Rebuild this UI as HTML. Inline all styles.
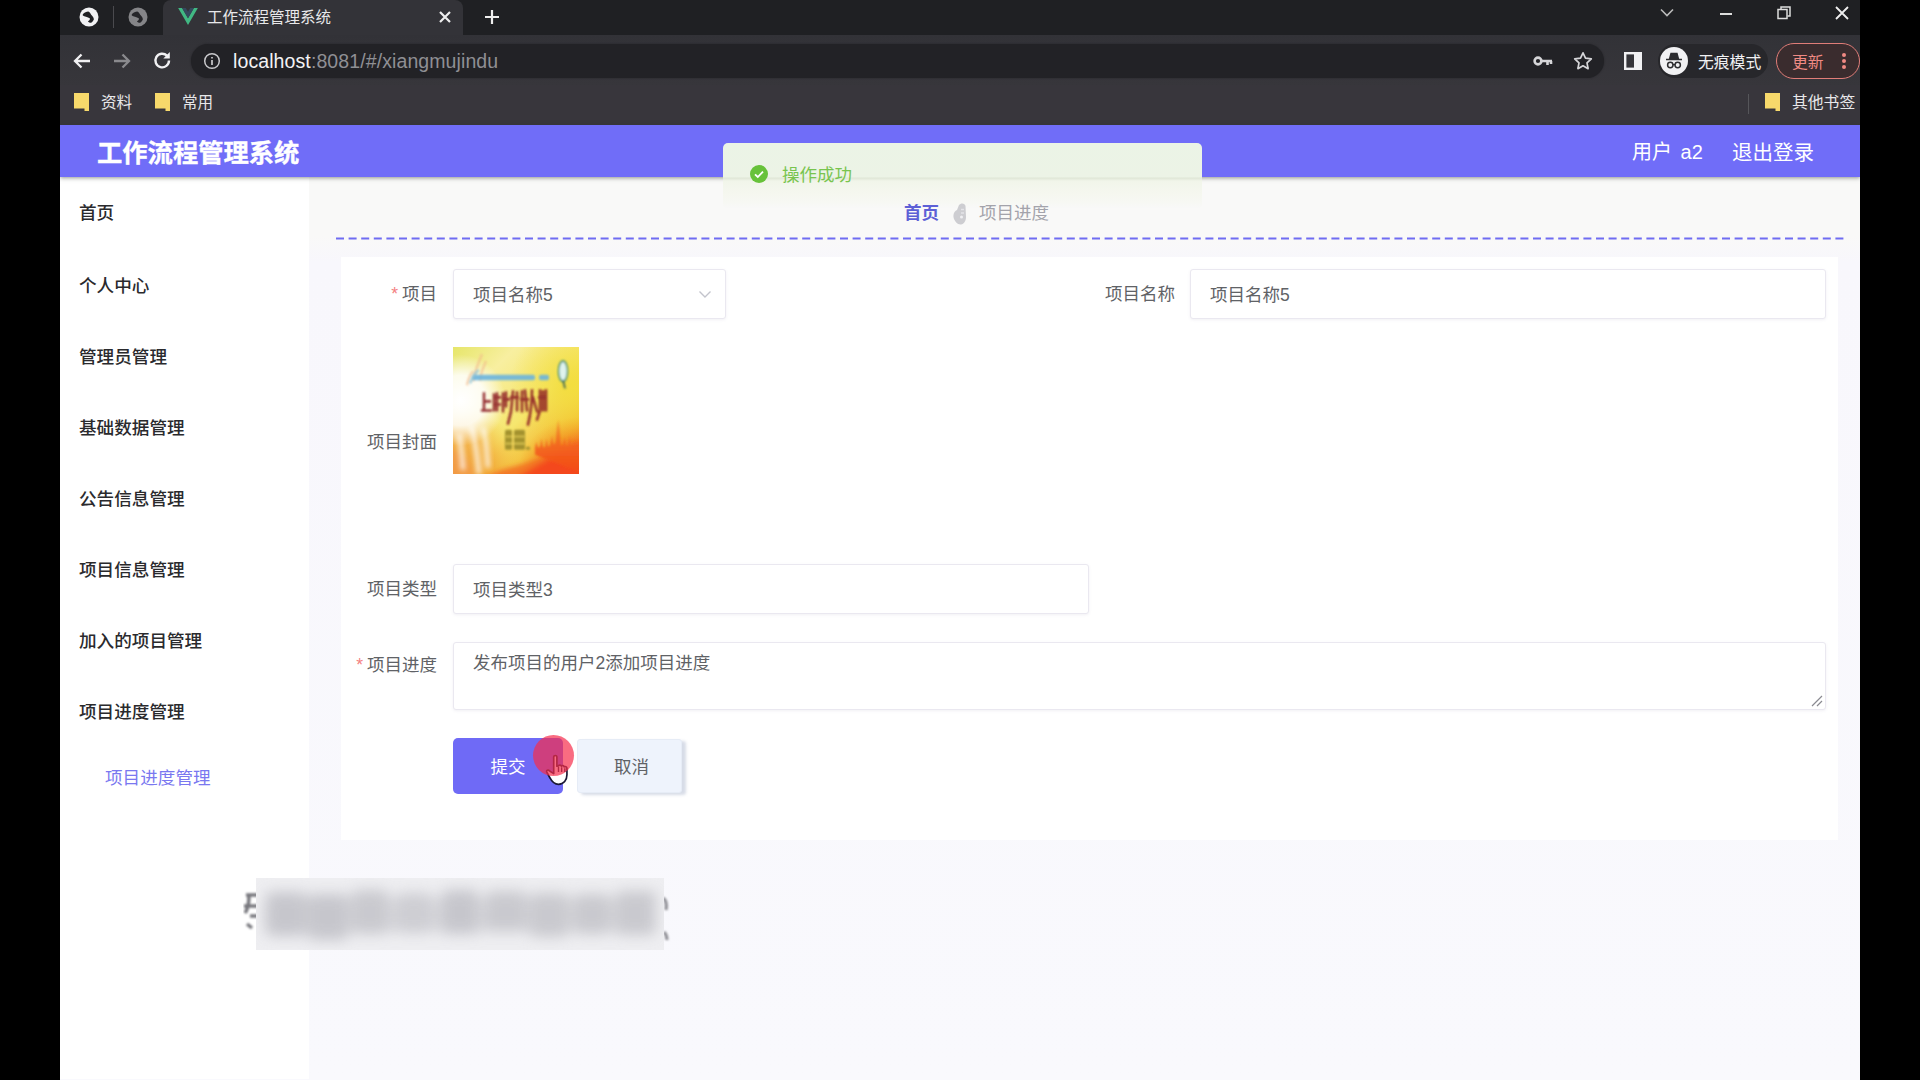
<!DOCTYPE html>
<html lang="zh-CN">
<head>
<meta charset="utf-8">
<title>工作流程管理系统</title>
<style>
*{box-sizing:border-box;margin:0;padding:0}
html,body{width:1920px;height:1080px;overflow:hidden;background:#000}
body{font-family:"Liberation Sans","Noto Sans CJK SC",sans-serif;position:relative;color:#333}
.abs{position:absolute}
#frame{position:absolute;left:60px;top:0;width:1800px;height:1080px;background:linear-gradient(#f9f9f8 0,#f9f9f8 236px,#f8f7fc 262px,#f9f9fd 100%);overflow:hidden}
/* browser chrome */
#tabstrip{position:absolute;left:0;top:0;width:1800px;height:35px;background:#1f2023}
#tab{position:absolute;left:103px;top:0;width:300px;height:35px;background:#333338;border-radius:8px 8px 0 0}
#toolbar{position:absolute;left:0;top:35px;width:1800px;height:50px;background:linear-gradient(#323237,#37363b)}
#urlpill{position:absolute;left:131px;top:9px;width:1413px;height:34px;border-radius:17px;background:#222226;box-shadow:0 0 2px #222226}
#bookmarks{position:absolute;left:0;top:85px;width:1800px;height:40px;background:#38363c}
.ctext{color:#e8e8ea;font-size:15px;white-space:nowrap;position:absolute}
/* app */
#apphead{position:absolute;left:0;top:125px;width:1800px;height:52px;background:#706df8;box-shadow:0 1px 4px rgba(40,50,40,.5)}
#sidebar{position:absolute;left:0;top:177px;width:249px;height:902px;background:#fff}
.mi{position:absolute;left:19px;font-size:17.6px;color:#2a2a2d;font-weight:500;white-space:nowrap;line-height:24px}
.lbl{position:absolute;font-size:17.5px;color:#606266;white-space:nowrap;line-height:24px;text-align:right}
.inp{position:absolute;background:#fff;border:1px solid #eae8f0;border-radius:3px;box-shadow:0 1px 3px rgba(120,110,150,.10);font-size:17.5px;color:#606266;line-height:24px;white-space:nowrap}
.inp span{position:absolute;left:19px}
.star{color:#f47f82;margin-right:4px}
</style>
</head>
<body>
<div id="frame">
  <!-- ===== browser chrome ===== -->
  <div id="tabstrip">
    <!-- globe icons -->
    <svg class="abs" style="left:18px;top:6px" width="22" height="22" viewBox="0 0 22 22"><circle cx="11" cy="11" r="9.5" fill="#f1f1f3"/><path d="M4.800 8.200C6.500 6.600 8.500 5.600 10.300 5.600c1.300.6 2.200 1.800 2.900 3.200 1.300 1.100 2.300 2.600 2.700 4.400-.5 1.600-1.500 2.800-2.900 3.600-1.200 0-2.300-.5-3.100-1.400 1.200-.6 2-1.600 2.100-2.900-1.200-.9-2.600-1.500-4-1.800-1.200-.2-2.300-.6-3.200-1.300z" fill="#1f2023"/></svg>
    <div class="abs" style="left:53px;top:6px;width:1px;height:22px;background:#4a4a4e"></div>
    <svg class="abs" style="left:67px;top:6px" width="22" height="22" viewBox="0 0 22 22"><circle cx="11" cy="11" r="9.500" fill="#858588"/><path d="M4.800 8.200C6.500 6.600 8.500 5.600 10.300 5.600c1.300.6 2.200 1.800 2.900 3.200 1.300 1.100 2.300 2.600 2.700 4.400-.5 1.600-1.500 2.800-2.900 3.600-1.200 0-2.300-.5-3.100-1.400 1.200-.6 2-1.600 2.100-2.900-1.200-.9-2.600-1.500-4-1.800-1.200-.2-2.300-.6-3.200-1.300z" fill="#26262a"/></svg>
    <div id="tab"></div>
    <!-- vue logo -->
    <svg class="abs" style="left:118px;top:8px" width="20" height="17" viewBox="0 0 22 19"><path d="M0 0h4.400L11 11.400 17.600 0H22L11 19z" fill="#41b883"/><path d="M4.400 0h4.100L11 4.300 13.500 0h4.100L11 11.400z" fill="#35495e"/></svg>
    <div class="ctext" style="left:147px;top:7px;font-size:15.5px;line-height:22px">工作流程管理系统</div>
    <svg class="abs" style="left:379px;top:11px" width="12" height="12" viewBox="0 0 12 12"><path d="M1 1l10 10M11 1L1 11" stroke="#eee" stroke-width="2.200" fill="none"/></svg>
    <svg class="abs" style="left:424px;top:9px" width="16" height="16" viewBox="0 0 16 16"><path d="M8 1v14M1 8h14" stroke="#eee" stroke-width="2.200" fill="none"/></svg>
    <!-- window controls -->
    <svg class="abs" style="left:1600px;top:8px" width="14" height="10" viewBox="0 0 14 10"><path d="M1 1.500l6 6 6-6" stroke="#bbb" stroke-width="1.600" fill="none"/></svg>
    <div class="abs" style="left:1660px;top:13px;width:12px;height:2px;background:#ddd"></div>
    <svg class="abs" style="left:1717px;top:6px" width="14" height="14" viewBox="0 0 14 14"><rect x="1" y="3.500" width="9" height="9" fill="none" stroke="#ddd" stroke-width="1.500"/><path d="M4 3.500V1h9v9h-2.500" fill="none" stroke="#ddd" stroke-width="1.500"/></svg>
    <svg class="abs" style="left:1775px;top:6px" width="14" height="14" viewBox="0 0 14 14"><path d="M1 1l12 12M13 1L1 13" stroke="#eee" stroke-width="1.800" fill="none"/></svg>
  </div>
  <div id="toolbar">
    <svg class="abs" style="left:12px;top:16px" width="20" height="20" viewBox="0 0 20 20"><path d="M18 10H3M9.500 3.500L3 10l6.500 6.500" stroke="#f1f1f3" stroke-width="2.300" fill="none"/></svg>
    <svg class="abs" style="left:52px;top:16px" width="20" height="20" viewBox="0 0 20 20"><path d="M2 10h15M10.500 3.500L17 10l-6.500 6.500" stroke="#8a8a8e" stroke-width="2.300" fill="none"/></svg>
    <svg class="abs" style="left:92px;top:15px" width="21" height="21" viewBox="0 0 21 21"><path d="M17 10.500a6.800 6.800 0 1 1-2-4.800" stroke="#f1f1f3" stroke-width="2.400" fill="none"/><path d="M17.800 2v6.500h-6.500z" fill="#f1f1f3"/></svg>
    <div id="urlpill">
      <svg class="abs" style="left:12px;top:8px" width="18" height="18" viewBox="0 0 18 18"><circle cx="9" cy="9" r="7.300" stroke="#c9c9cc" stroke-width="1.500" fill="none"/><path d="M9 8v5M9 5v1.600" stroke="#c9c9cc" stroke-width="1.700"/></svg>
      <div class="ctext" style="left:42px;top:4px;font-size:19.5px;line-height:26px;letter-spacing:.1px;color:#f3f3f5">localhost<span style="color:#8f8f94">:8081/#/xiangmujindu</span></div>
      <!-- key -->
      <svg class="abs" style="left:1342px;top:10px" width="20" height="14" viewBox="0 0 20 14"><circle cx="5" cy="7" r="3.400" stroke="#d6d6d9" stroke-width="2.600" fill="none"/><path d="M8 7h11M14.500 7v4M18 7v3" stroke="#d6d6d9" stroke-width="2.600" fill="none"/></svg>
      <!-- star -->
      <svg class="abs" style="left:1382px;top:7px" width="20" height="20" viewBox="0 0 20 20"><path d="M10 1.800l2.500 5.400 5.800.7-4.300 4 1.100 5.800L10 14.800l-5.100 2.900L6 11.900l-4.300-4 5.800-.7z" stroke="#d6d6d9" stroke-width="1.700" fill="none" stroke-linejoin="round"/></svg>
    </div>
    <!-- side panel -->
    <svg class="abs" style="left:1564px;top:17px" width="18" height="18" viewBox="0 0 18 18"><rect x="1.200" y="1.200" width="15.600" height="15.600" fill="none" stroke="#f1f1f3" stroke-width="2.400"/><rect x="10" y="1" width="7" height="16" fill="#f1f1f3"/></svg>
    <!-- incognito -->
    <div class="abs" style="left:1598px;top:9px;width:110px;height:34px;border-radius:17px;background:#27272b"></div>
    <svg class="abs" style="left:1600px;top:12px" width="28" height="28" viewBox="0 0 28 28"><circle cx="14" cy="14" r="14" fill="#f1f1f3"/><path d="M6 12.500h16M9.500 12l1.500-5.500h6l1.500 5.500z" fill="#2c2c2f" stroke="#2c2c2f" stroke-width="1.400"/><circle cx="10.300" cy="18" r="2.700" fill="none" stroke="#2c2c2f" stroke-width="1.500"/><circle cx="17.700" cy="18" r="2.700" fill="none" stroke="#2c2c2f" stroke-width="1.500"/><path d="M13 17.600h2" stroke="#2c2c2f" stroke-width="1.400"/></svg>
    <div class="ctext" style="left:1638px;top:17px;font-size:15.8px;line-height:22px;color:#f1f1f3">无痕模式</div>
    <div class="abs" style="left:1716px;top:8px;width:84px;height:36px;border:1.500px solid #e07d78;border-radius:18px;background:#3a2c2e"></div>
    <div class="ctext" style="left:1732px;top:17px;font-size:15.8px;line-height:22px;color:#f08a84">更新</div>
    <div class="abs" style="left:1782px;top:18px;width:4px;height:4px;border-radius:2px;background:#f08a84;box-shadow:0 6px 0 #f08a84,0 12px 0 #f08a84"></div>
  </div>
  <div id="bookmarks">
    <svg class="abs" style="left:14px;top:8px" width="15" height="18" viewBox="0 0 15 18"><path d="M0 0h15v18h-4.500v-2.500H0z" fill="#f7d96b"/></svg>
    <div class="ctext" style="left:41px;top:7px;font-size:15.6px;line-height:22px">资料</div>
    <svg class="abs" style="left:95px;top:8px" width="15" height="18" viewBox="0 0 15 18"><path d="M0 0h15v18h-4.500v-2.500H0z" fill="#f7d96b"/></svg>
    <div class="ctext" style="left:122px;top:7px;font-size:15.6px;line-height:22px">常用</div>
    <div class="abs" style="left:1688px;top:9px;width:1px;height:20px;background:#56565a"></div>
    <svg class="abs" style="left:1705px;top:8px" width="15" height="18" viewBox="0 0 15 18"><path d="M0 0h15v18h-4.500v-2.500H0z" fill="#f7d96b"/></svg>
    <div class="ctext" style="left:1732px;top:7px;font-size:15.8px;line-height:22px">其他书签</div>
  </div>

  <!-- ===== app ===== -->
  <div id="sidebar">
    <div class="mi" style="top:24px">首页</div>
    <div class="mi" style="top:97px">个人中心</div>
    <div class="mi" style="top:168px">管理员管理</div>
    <div class="mi" style="top:239px">基础数据管理</div>
    <div class="mi" style="top:310px">公告信息管理</div>
    <div class="mi" style="top:381px">项目信息管理</div>
    <div class="mi" style="top:452px">加入的项目管理</div>
    <div class="mi" style="top:523px">项目进度管理</div>
    <div class="mi" style="left:45px;top:589px;color:#7a78f0;font-weight:400">项目进度管理</div>
  </div>
  <div id="main">
    <!-- breadcrumb -->
    <div class="abs" style="z-index:5;left:844px;top:201px;font-size:17.500px;line-height:24px;font-weight:700;color:#5d60d6;white-space:nowrap">首页</div>
    <svg class="abs" style="z-index:5;left:891px;top:201px" width="18" height="26" viewBox="0 0 18 26"><g style="filter:blur(.7px)"><path d="M8 4c2-2.500 6-2 6.500 1l.5 11c0 4-2 7-5 7.500S3 20 2.500 16 4 10 6 9z" fill="#cdcdd1"/><path d="M10 8.500h3M10 12h3" stroke="#e4e4e8" stroke-width="1.300"/><circle cx="10.500" cy="16" r="1.500" fill="#f0f0f3"/></g></svg>
    <div class="abs" style="z-index:5;left:919px;top:201px;font-size:17.500px;line-height:24px;color:#a3a3ab;white-space:nowrap">项目进度</div>
    <!-- dashed line -->
    <svg class="abs" style="left:276px;top:236px" width="1508" height="5"><line x1="0" y1="2.500" x2="1508" y2="2.500" stroke="#6f6cf2" stroke-width="2.200" stroke-dasharray="8 4.600"/></svg>
    <!-- card -->
    <div id="card" class="abs" style="left:281px;top:257px;width:1497px;height:583px;background:#fff"></div>

    <!-- row 1 -->
    <div class="lbl" style="left:277px;width:100px;top:282px"><span class="star">*</span>项目</div>
    <div class="inp" style="left:393px;top:269px;width:273px;height:50px"><span style="top:13px">项目名称5</span>
      <svg class="abs" style="left:244px;top:20px" width="14" height="9" viewBox="0 0 14 9"><path d="M1.500 1.500L7 7l5.500-5.500" stroke="#c3c4cc" stroke-width="1.400" fill="none"/></svg>
    </div>
    <div class="lbl" style="left:1015px;width:100px;top:282px">项目名称</div>
    <div class="inp" style="left:1130px;top:269px;width:636px;height:50px"><span style="top:13px">项目名称5</span></div>

    <!-- cover -->
    <div class="lbl" style="left:277px;width:100px;top:430px">项目封面</div>
    <svg id="cover" class="abs" style="left:393px;top:347px" width="126" height="127" viewBox="0 0 126 126" preserveAspectRatio="none">
      <defs>
        <linearGradient id="cg1" x1="0" y1="0" x2="1" y2="1"><stop offset="0" stop-color="#e6e66a"/><stop offset=".25" stop-color="#f8efa0"/><stop offset=".55" stop-color="#f6e66e"/><stop offset=".8" stop-color="#f3b32a"/><stop offset="1" stop-color="#f2541c"/></linearGradient>
        <radialGradient id="cg2" cx="0.06" cy="0.42" r="0.36"><stop offset="0" stop-color="#fff" stop-opacity="1"/><stop offset=".55" stop-color="#fff" stop-opacity=".85"/><stop offset="1" stop-color="#fff" stop-opacity="0"/></radialGradient>
        <radialGradient id="cg3" cx="1" cy="1.050" r="0.5"><stop offset="0" stop-color="#f53a12"/><stop offset=".6" stop-color="#f4571a" stop-opacity=".9"/><stop offset="1" stop-color="#f48a20" stop-opacity="0"/></radialGradient>
        <radialGradient id="cg4" cx="0" cy="1" r="0.55"><stop offset="0" stop-color="#f09a3a"/><stop offset=".6" stop-color="#f2a838" stop-opacity=".8"/><stop offset="1" stop-color="#f4c040" stop-opacity="0"/></radialGradient>
        <radialGradient id="cg5" cx="0.95" cy="0.3" r="0.5"><stop offset="0" stop-color="#f3de3e"/><stop offset="1" stop-color="#f3de3e" stop-opacity="0"/></radialGradient>
        <linearGradient id="cg6" x1="0" y1="0" x2="0" y2="1"><stop offset="0" stop-color="#f08a2a" stop-opacity=".75"/><stop offset=".45" stop-color="#f2661e" stop-opacity=".9"/><stop offset="1" stop-color="#f44a16" stop-opacity=".95"/></linearGradient>
        <filter id="cb1" x="-20%" y="-20%" width="140%" height="140%"><feGaussianBlur stdDeviation="1.100"/></filter>
        <filter id="cb2" x="-20%" y="-20%" width="140%" height="140%"><feGaussianBlur stdDeviation="2.500"/></filter>
        <clipPath id="cc"><rect width="126" height="126"/></clipPath>
      </defs>
      <g clip-path="url(#cc)">
        <rect width="126" height="126" fill="url(#cg1)"/>
        <rect width="126" height="126" fill="url(#cg5)"/>
        <rect width="126" height="126" fill="url(#cg4)"/>
        <rect width="126" height="126" fill="url(#cg3)" opacity=".55"/>
        <g filter="url(#cb2)"><path d="M26 132L48 122 70 116 90 109 106 102 130 93V132z" fill="#f3681e" opacity=".8"/><path d="M60 132L84 118 104 107 130 97V132z" fill="#f4461a" opacity=".9"/><path d="M-4 100c10 4 20 12 28 30H-4z" fill="#f29a4a" opacity=".7"/></g>
        <rect width="126" height="126" fill="url(#cg2)"/>
        <!-- white streaks bottom-left -->
        <g filter="url(#cb2)" opacity=".75"><path d="M18 78c4 12 6 28 8 48M30 80c3 10 4 24 5 40M6 86c2 10 3 22 4 36" stroke="#fff" stroke-width="5" fill="none"/></g>
        <!-- skyline -->
        <g filter="url(#cb1)"><path d="M82 107V100l1.500-6 1.500 6 2-1 1.500-8 1.500 8 2 1 1.500-9 1.500 8 2-1 2-10 1.500 9 2-2 1.500-14 1.200-9 1.300 9 1.500 16 2 1 1.500-9 1.500 9 2 1 1.500-11 1.500 10 2 1 1.500-7 1.500 7 2-1 1.500-6 1.500 5v28z" fill="url(#cg6)"/></g>
        <g filter="url(#cb1)" opacity=".7"><path d="M20 34c2-9 5-18 9-27M27 33c1-7 3-13 6-19M14 38c1-5 3-10 6-14" stroke="#f2b98a" stroke-width="2.200" fill="none"/></g>
        <!-- blue banner -->
        <g filter="url(#cb1)"><rect x="19" y="27.500" width="63" height="5.500" rx="2" fill="#6ab4de" opacity=".9"/><rect x="86" y="27.500" width="10" height="5.500" rx="2" fill="#6ab4de" opacity=".9"/><path d="M17 36c2-6 6-12 9-13" stroke="#8fc6d8" stroke-width="2.500" fill="none" opacity=".8"/></g>
        <!-- dark red title strokes -->
        <g filter="url(#cb1)" fill="none" stroke="#8f2226" stroke-width="2.600" stroke-linecap="round" opacity=".92">
          <path d="M31 46v17M29 63h9M32 54h5"/>
          <path d="M41 47v16M44 46v17M41 50h6M41 57h6"/>
          <path d="M50 46v18M53 45v14M50 52h6"/>
          <path d="M60 44l-2 20-3 12M58 50h7M64 45v18"/>
          <path d="M69 44v20M72 43l2 20M68 52h7"/>
          <path d="M79 43c0 10-1 22-4 34M80 50l4 14"/>
          <path d="M87 43v20l-3 9M90 44v19M86 50h7M93 43v20"/>
        </g>
        <g filter="url(#cb1)"><path d="M96 66h6" stroke="#c9a070" stroke-width="1.500" opacity=".7"/></g>
        <!-- olive subtitle -->
        <g filter="url(#cb1)" fill="#a3922f"><rect x="52" y="82" width="7" height="20" rx="1.500"/><rect x="61" y="82" width="11" height="20" rx="1.500"/><rect x="73" y="99" width="4" height="3" rx="1"/></g>
        <g filter="url(#cb1)" fill="#f0d860" opacity=".8"><rect x="52" y="88" width="20" height="1.600"/><rect x="52" y="95" width="20" height="1.600"/></g>
        <!-- emblem -->
        <g filter="url(#cb1)"><ellipse cx="110" cy="24" rx="4.500" ry="10" fill="#dff3ee" stroke="#3e8f7c" stroke-width="1.600"/><path d="M110 33l2 8" stroke="#2c5a55" stroke-width="1.600"/></g>
      </g>
    </svg>

    <!-- type -->
    <div class="lbl" style="left:277px;width:100px;top:577px">项目类型</div>
    <div class="inp" style="left:393px;top:564px;width:636px;height:50px"><span style="top:13px">项目类型3</span></div>

    <!-- progress -->
    <div class="lbl" style="left:277px;width:100px;top:653px"><span class="star">*</span>项目进度</div>
    <div class="inp" style="left:393px;top:642px;width:1373px;height:68px"><span style="top:8px">发布项目的用户2添加项目进度</span>
      <svg class="abs" style="right:2px;bottom:2px" width="12" height="12" viewBox="0 0 12 12"><path d="M11 1L1 11M11 6L6 11" stroke="#8a8a90" stroke-width="1.200"/></svg>
    </div>

    <!-- buttons -->
    <div class="abs" style="left:393px;top:738px;width:110px;height:56px;border-radius:5px;background:#6f6af6;color:#fff;font-size:17.500px;line-height:59px;text-align:center">提交</div>
    <div class="abs" style="left:517px;top:739px;width:105px;height:54px;border-radius:3px;background:#eef3fc;border:1px solid #e6ecf6;box-shadow:4px 2px 3px rgba(160,172,198,.42);color:#606266;font-size:17.500px;line-height:55px;text-align:center;padding-left:4px">取消</div>
    <!-- click indicator + cursor -->
        <svg class="abs" style="left:484px;top:753px" width="30" height="36" viewBox="0 0 28 34"><path d="M9 3.500c0-1.500 3-1.500 3 0v9l1.500-.3c.5-1.200 2.500-1 2.700.2.800-.9 2.600-.5 2.700.7 1-.6 2.600 0 2.600 1.500v6c0 5-3 9-8 9-4 0-6-2-8-6l-3-5.500c-.7-1.500 1.200-2.600 2.300-1.400L9 19.500z" fill="#fff" stroke="#1a1733" stroke-width="1.600" stroke-linejoin="round"/><path d="M13.500 13v5M16.500 13.500v4.500M19.500 14.500v3.500" stroke="#1a1733" stroke-width="1.300"/></svg>
    <div class="abs" style="left:473px;top:735px;width:41px;height:41px;border-radius:50%;background:rgba(246,45,75,.70)"></div>

    <!-- blurred watermark -->
    <svg class="abs" style="left:183px;top:890px" width="16" height="44" viewBox="0 0 16 44"><g style="filter:blur(.8px)"><path d="M3 5h13M1 16h15M6 5c0 8-1 14-4 18M7 26h9M4 34l5 4" stroke="#77777d" stroke-width="3.500" fill="none"/></g></svg>
    <svg class="abs" style="left:602px;top:892px" width="10" height="52" viewBox="0 0 10 52"><g style="filter:blur(.8px)"><path d="M1 6c3 2 4 6 3 12M2 40c2 2 3 5 3 8" stroke="#8a8a90" stroke-width="3" fill="none"/></g></svg>
    <div id="wm" class="abs" style="left:196px;top:878px;width:408px;height:72px;background:#eeeef1;overflow:hidden"><div style="position:absolute;left:0;top:0;width:408px;height:72px;filter:blur(7px);opacity:.72"><div style="position:absolute;left:8px;top:20px;width:392px;height:34px;background:#d0d0d5;border-radius:8px"></div><div style="position:absolute;left:10px;top:14px;width:40px;height:44px;background:#b8b8bf;border-radius:5px"></div><div style="position:absolute;left:52px;top:16px;width:40px;height:46px;background:#b8b8bf;border-radius:5px"></div><div style="position:absolute;left:96px;top:12px;width:36px;height:44px;background:#bcbcc2;border-radius:5px"></div><div style="position:absolute;left:140px;top:15px;width:36px;height:40px;background:#c2c2c8;border-radius:5px"></div><div style="position:absolute;left:186px;top:12px;width:36px;height:44px;background:#b8b8bf;border-radius:5px"></div><div style="position:absolute;left:230px;top:13px;width:40px;height:40px;background:#bcbcc2;border-radius:5px"></div><div style="position:absolute;left:274px;top:15px;width:38px;height:44px;background:#bcbcc2;border-radius:5px"></div><div style="position:absolute;left:318px;top:16px;width:36px;height:40px;background:#bcbcc2;border-radius:5px"></div><div style="position:absolute;left:360px;top:13px;width:40px;height:44px;background:#bcbcc2;border-radius:5px"></div></div></div>
  </div>
  <div id="apphead">
    <div class="abs" style="left:37px;top:11px;font-size:25.3px;line-height:34px;font-weight:700;-webkit-text-stroke:.35px #fff;color:#fff;white-space:nowrap">工作流程管理系统</div>
    <div class="abs" style="left:1572px;top:13px;font-size:20px;line-height:28px;color:#fff;white-space:nowrap;word-spacing:3px">用户 a2</div>
    <div class="abs" style="left:1672px;top:14px;font-size:20.5px;line-height:28px;color:#fff;white-space:nowrap">退出登录</div>
  </div>
  <!-- toast -->
  <div id="toast" class="abs" style="left:663px;top:143px;width:479px;height:65px;border-radius:5px 5px 3px 3px;background:linear-gradient(#ebf4e6 0,#ecf3e6 34px,#dfe6d6 35px,#f1f5ea 38px,#f5f7ef 50px,#f7f8f4 60px,rgba(248,248,248,.7) 65px);">
    <svg class="abs" style="left:27px;top:22px" width="18" height="18" viewBox="0 0 18 18"><circle cx="9" cy="9" r="9" fill="#67c23a"/><path d="M5 9.300l2.800 2.700L13 6.600" stroke="#fff" stroke-width="1.800" fill="none"/></svg>
    <div class="abs" style="left:59px;top:20px;font-size:17.5px;line-height:24px;color:#78c44e;white-space:nowrap">操作成功</div>
  </div>
</div>
</body>
</html>
